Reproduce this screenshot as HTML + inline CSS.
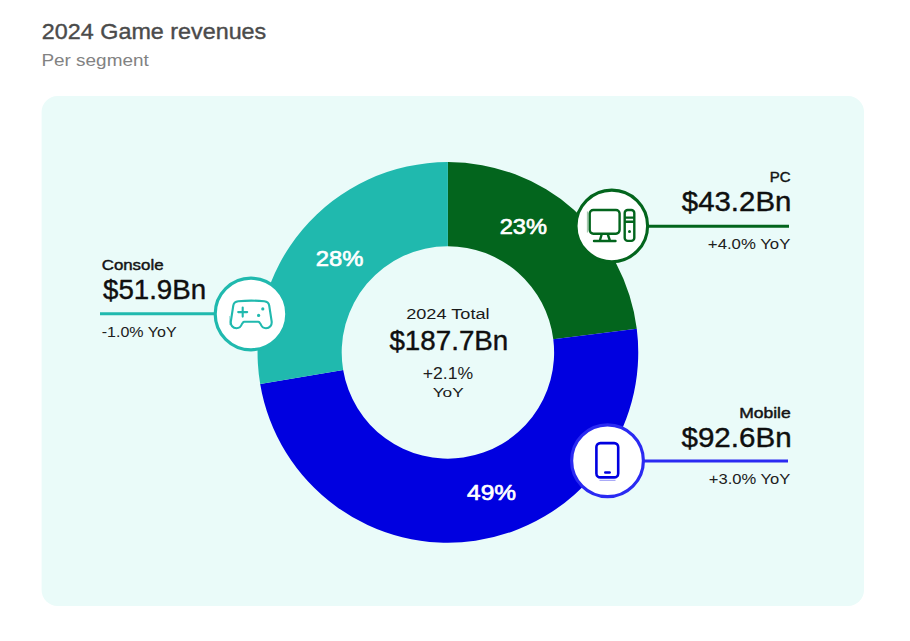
<!DOCTYPE html>
<html>
<head>
<meta charset="utf-8">
<style>
html,body{margin:0;padding:0;background:#ffffff;width:910px;height:641px;overflow:hidden;}
svg{display:block;}
text{font-family:"Liberation Sans",sans-serif;}
</style>
</head>
<body>
<svg width="910" height="641" viewBox="0 0 910 641">
  <rect x="41.6" y="96" width="822.4" height="510" rx="16" ry="16" fill="#eafbf9"/>
  <g>
    <path d="M447.90,162.05 A190.35,190.35 0 0 1 636.77,328.73 L553.28,339.19 A106.2,106.2 0 0 0 447.90,246.20 Z" fill="#03651d"/>
    <path d="M636.77,328.73 A190.35,190.35 0 0 1 260.18,383.95 L343.17,370.00 A106.2,106.2 0 0 0 553.28,339.19 Z" fill="#0000e0"/>
    <path d="M260.18,383.95 A190.35,190.35 0 0 1 447.90,162.05 L447.90,246.20 A106.2,106.2 0 0 0 343.17,370.00 Z" fill="#20b9ae"/>
  </g>
  <line x1="100" y1="313.7" x2="216" y2="313.7" stroke="#20b9ae" stroke-width="3"/>
  <circle cx="251" cy="314" r="35.8" fill="#ffffff" stroke="#20b9ae" stroke-width="3.2"/>
  <line x1="646" y1="226.3" x2="789" y2="226.3" stroke="#03651d" stroke-width="2.9"/>
  <circle cx="611.8" cy="225.9" r="35.8" fill="#ffffff" stroke="#03651d" stroke-width="3.1"/>
  <line x1="641" y1="461" x2="788" y2="461" stroke="#2a2af2" stroke-width="3"/>
  <circle cx="607.5" cy="460.8" r="35.9" fill="#ffffff" stroke="#2a2af2" stroke-width="3.2"/>
  <g fill="none" stroke="#20b9ae" stroke-width="2.1" stroke-linecap="round" stroke-linejoin="round">
    <path d="M238.2,301.3 C246,300.5 256.5,300.5 264.3,301.3 Q268.5,301.9 269.2,305.5 L271.6,321 C272.3,325.5 269.5,328.2 266,328.2 C263,328.2 261.5,326.5 260.6,324 L259.6,322.6 Q259.1,321.8 258.2,321.8 L244.3,321.8 Q243.4,321.8 242.9,322.6 L241.9,324 C241,326.5 239.5,328.2 236.5,328.2 C233,328.2 230.2,325.5 230.9,321 L233.3,305.5 Q234,301.9 238.2,301.3 Z"/>
    <path d="M238.2,312.1 H247.2 M242.7,307.6 V316.6"/>
  </g>
  <circle cx="262.8" cy="308.9" r="1.6" fill="#20b9ae"/>
  <circle cx="258.6" cy="315.4" r="1.6" fill="#20b9ae"/>
  <g fill="none" stroke="#03651d" stroke-width="2.4" stroke-linecap="round" stroke-linejoin="round">
    <rect x="589.7" y="210" width="29.9" height="23.7" rx="3.6"/>
    <path d="M601.5,235 L600,240 M608,235 L609.7,240 M594,241 H615.5"/>
    <rect x="624.7" y="210" width="9.6" height="30.9" rx="3"/>
    <path stroke-linecap="butt" d="M624.7,217.6 H634.3 M624.7,221.8 H634.3"/>
  </g>
  <circle cx="629.5" cy="231.5" r="1.5" fill="#03651d"/>
  <line x1="587.4" y1="211.5" x2="587.4" y2="232.5" stroke="#03651d" stroke-width="0.9" opacity="0.45"/>
  <line x1="229.6" y1="316" x2="229.6" y2="325" stroke="#20b9ae" stroke-width="0.9" opacity="0.45"/>
  <g fill="none" stroke="#0000e0" stroke-width="2.6" stroke-linecap="round" stroke-linejoin="round">
    <rect x="596.4" y="443.1" width="21.8" height="34.3" rx="4"/>
    <path d="M605.3,472.5 H609.6"/>
  </g>
  <line x1="599.5" y1="480.3" x2="615.5" y2="480.3" stroke="#5050f0" stroke-width="1" opacity="0.6"/>

  <text transform="translate(41.87 38.90) scale(1.0950 1)" font-size="21.32" font-weight="normal" stroke="#4b4b4b" stroke-width="0.384" stroke-linejoin="round" fill="#4b4b4b">2024 Game revenues</text>
  <text transform="translate(41.38 65.70) scale(1.1465 1)" font-size="16.52" font-weight="normal" fill="#828282">Per segment</text>
  <text transform="translate(101.73 269.70) scale(1.1769 1)" font-size="14.33" font-weight="normal" stroke="#141414" stroke-width="0.430" stroke-linejoin="round" fill="#141414">Console</text>
  <text transform="translate(103.00 298.90) scale(1.0163 1)" font-size="27.24" font-weight="normal" stroke="#0f0f0f" stroke-width="0.409" stroke-linejoin="round" fill="#0f0f0f">$51.9Bn</text>
  <text transform="translate(101.76 336.70) scale(1.0644 1)" font-size="15.07" font-weight="normal" fill="#202020">-1.0% YoY</text>
  <text transform="translate(769.65 181.60) scale(1.0470 1)" font-size="14.33" font-weight="normal" stroke="#141414" stroke-width="0.430" stroke-linejoin="round" fill="#141414">PC</text>
  <text transform="translate(681.80 211.40) scale(1.0976 1)" font-size="26.81" font-weight="normal" stroke="#0f0f0f" stroke-width="0.402" stroke-linejoin="round" fill="#0f0f0f">$43.2Bn</text>
  <text transform="translate(707.86 248.70) scale(1.0810 1)" font-size="15.51" font-weight="normal" fill="#202020">+4.0% YoY</text>
  <text transform="translate(739.17 418.00) scale(1.2102 1)" font-size="14.47" font-weight="normal" stroke="#141414" stroke-width="0.434" stroke-linejoin="round" fill="#141414">Mobile</text>
  <text transform="translate(681.50 446.70) scale(1.0969 1)" font-size="26.95" font-weight="normal" stroke="#0f0f0f" stroke-width="0.404" stroke-linejoin="round" fill="#0f0f0f">$92.6Bn</text>
  <text transform="translate(708.87 483.70) scale(1.1311 1)" font-size="14.64" font-weight="normal" fill="#202020">+3.0% YoY</text>
  <text transform="translate(406.19 319.00) scale(1.2157 1)" font-size="14.93" font-weight="normal" fill="#1a1a1a">2024 Total</text>
  <text transform="translate(389.40 349.70) scale(1.0304 1)" font-size="26.95" font-weight="normal" stroke="#0f0f0f" stroke-width="0.404" stroke-linejoin="round" fill="#0f0f0f">$187.7Bn</text>
  <text transform="translate(422.82 378.50) scale(1.0554 1)" font-size="16.67" font-weight="normal" fill="#202020">+2.1%</text>
  <text transform="translate(432.68 397.00) scale(1.2656 1)" font-size="13.62" font-weight="normal" fill="#202020">YoY</text>
  <text transform="translate(315.75 265.80) scale(1.0559 1)" font-size="22.55" font-weight="normal" stroke="#ffffff" stroke-width="0.677" stroke-linejoin="round" fill="#ffffff">28%</text>
  <text transform="translate(499.65 233.80) scale(1.0557 1)" font-size="22.41" font-weight="normal" stroke="#ffffff" stroke-width="0.672" stroke-linejoin="round" fill="#ffffff">23%</text>
  <text transform="translate(467.06 499.90) scale(1.0917 1)" font-size="22.41" font-weight="normal" stroke="#ffffff" stroke-width="0.672" stroke-linejoin="round" fill="#ffffff">49%</text>
</svg>
</body>
</html>
